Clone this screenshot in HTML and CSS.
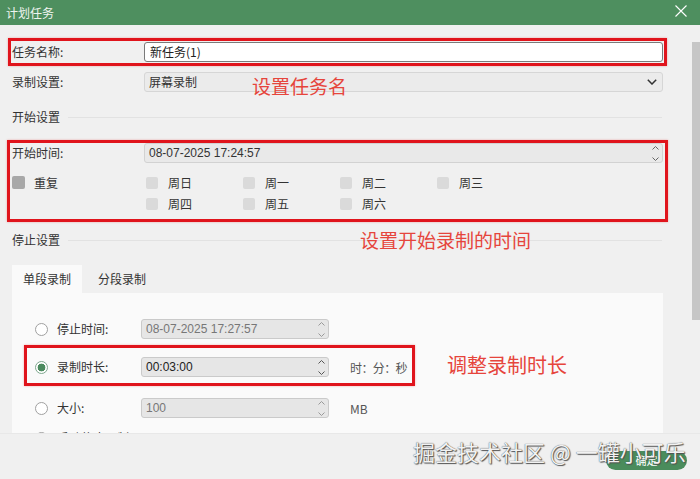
FILE: index.html
```html
<!DOCTYPE html>
<html lang="zh">
<head>
<meta charset="utf-8">
<title>计划任务</title>
<link rel="stylesheet" href="styles.css">
</head>
<body>
<div class="window">
  <div class="titlebar">
    <span class="title">计划任务</span>
    <svg class="close" width="12" height="12" viewBox="0 0 12 12"><path d="M0.5 0.5 L11.5 11.5 M11.5 0.5 L0.5 11.5" stroke="#fff" stroke-width="1.1" fill="none"/></svg>
  </div>
  <div class="body">
    <div class="content">
      <div class="hl hl-name">
        <div class="row">
          <span class="lbl">任务名称:</span>
          <div class="field input">新任务(1)</div>
        </div>
      </div>
      <div class="row row-mode">
        <span class="lbl">录制设置:</span>
        <div class="field select">
          <span>屏幕录制</span>
          <svg class="chev" width="10" height="6" viewBox="0 0 10 6"><path d="M0.8 0.8 L5 5 L9.2 0.8" stroke="#333" stroke-width="1.5" fill="none"/></svg>
        </div>
      </div>
      <div class="section"><span>开始设置</span><span class="rule"></span></div>
      <div class="hl hl-start">
        <div class="row">
          <span class="lbl">开始时间:</span>
          <div class="field spin">
            <span class="num">08-07-2025 17:24:57</span>
            <span class="spinner">
              <svg width="7" height="4" viewBox="0 0 7 4"><path d="M0.5 3.5 L3.5 0.5 L6.5 3.5" stroke="#666" stroke-width="1" fill="none"/></svg>
              <svg width="7" height="4" viewBox="0 0 7 4"><path d="M0.5 0.5 L3.5 3.5 L6.5 0.5" stroke="#666" stroke-width="1" fill="none"/></svg>
            </span>
          </div>
        </div>
        <div class="repeat">
          <div class="repeat-main"><span class="cb cb-dark"></span><span>重复</span></div>
          <div class="days">
            <div class="day"><span class="cb"></span><span>周日</span></div>
            <div class="day"><span class="cb"></span><span>周一</span></div>
            <div class="day"><span class="cb"></span><span>周二</span></div>
            <div class="day"><span class="cb"></span><span>周三</span></div>
            <div class="day"><span class="cb"></span><span>周四</span></div>
            <div class="day"><span class="cb"></span><span>周五</span></div>
            <div class="day"><span class="cb"></span><span>周六</span></div>
          </div>
        </div>
      </div>
      <div class="section section-stop"><span>停止设置</span><span class="rule"></span></div>
      <div class="tabs">
        <div class="tab active">单段录制</div>
        <div class="tab">分段录制</div>
      </div>
      <div class="panel">
        <div class="prow">
          <span class="radio"></span>
          <span class="plbl">停止时间:</span>
          <div class="pfield disabled">
            <span class="num">08-07-2025 17:27:57</span>
            <span class="spinner">
              <svg width="7" height="4" viewBox="0 0 7 4"><path d="M0.5 3.5 L3.5 0.5 L6.5 3.5" stroke="#999" stroke-width="1" fill="none"/></svg>
              <svg width="7" height="4" viewBox="0 0 7 4"><path d="M0.5 0.5 L3.5 3.5 L6.5 0.5" stroke="#999" stroke-width="1" fill="none"/></svg>
            </span>
          </div>
        </div>
        <div class="hl hl-dur">
          <div class="prow prow-in">
            <span class="radio checked"></span>
            <span class="plbl">录制时长:</span>
            <div class="pfield active">
              <span class="num">00:03:00</span>
              <span class="spinner">
                <svg width="7" height="4" viewBox="0 0 7 4"><path d="M0.5 3.5 L3.5 0.5 L6.5 3.5" stroke="#555" stroke-width="1" fill="none"/></svg>
                <svg width="7" height="4" viewBox="0 0 7 4"><path d="M0.5 0.5 L3.5 3.5 L6.5 0.5" stroke="#555" stroke-width="1" fill="none"/></svg>
              </span>
            </div>
            <span class="unit unit-time">时：分：秒</span>
          </div>
        </div>
        <div class="prow prow-size">
          <span class="radio"></span>
          <span class="plbl">大小:</span>
          <div class="pfield disabled">
            <span class="num">100</span>
            <span class="spinner">
              <svg width="7" height="4" viewBox="0 0 7 4"><path d="M0.5 3.5 L3.5 0.5 L6.5 3.5" stroke="#999" stroke-width="1" fill="none"/></svg>
              <svg width="7" height="4" viewBox="0 0 7 4"><path d="M0.5 0.5 L3.5 3.5 L6.5 0.5" stroke="#999" stroke-width="1" fill="none"/></svg>
            </span>
          </div>
          <span class="unit">MB</span>
        </div>
        <div class="prow prow-last">
          <span class="radio"></span>
          <span class="plbl">手动停止录制</span>
        </div>
      </div>
    </div>
    <div class="scrollbar"><div class="thumb"></div></div>
  </div>
  <div class="footer">
    <button class="ok">确定</button>
  </div>
  <div class="note note-name">设置任务名</div>
  <div class="note note-start">设置开始录制的时间</div>
  <div class="note note-dur">调整录制时长</div>
  <div class="watermark">掘金技术社区 @ 一罐小可乐</div>
</div>
</body>
</html>
```
FILE: styles.css
```css
* { box-sizing: border-box; }
html, body { margin: 0; padding: 0; }
body {
  width: 700px;
  height: 479px;
  overflow: hidden;
  background: #f0f0f0;
  font-family: "Noto Sans CJK SC", "Noto Sans", sans-serif;
  font-size: 12px;
  color: #333;
}
.window { position: relative; width: 700px; height: 479px; }

.titlebar {
  height: 25px;
  background: #4e8f5f;
  color: #fff;
  display: flex;
  align-items: center;
  justify-content: space-between;
  padding: 0 13px 0 6px;
}
.title { font-size: 12px; line-height: 24px; color: #eef4ef; }
.close { margin-top: -3px; }

.body { display: flex; height: 408px; overflow: hidden; }
.content { width: 692px; padding-top: 13px; overflow: hidden; }
.scrollbar { width: 8px; padding-top: 17px; }
.thumb { height: 278px; background: #c6c6c6; }

.hl {
  border: 3px solid #e0141c;
  box-shadow: 0 0 2px rgba(230, 30, 30, 0.35);
}
.hl-name { margin-left: 8px; width: 659px; padding: 1px; }
.row { display: flex; align-items: center; height: 20px; }
.lbl { width: 132px; line-height: 20px; }
.field {
  width: 519px;
  height: 20px;
  border-radius: 3px;
  display: flex;
  align-items: center;
  justify-content: space-between;
  padding-left: 5px;
  line-height: 18px;
}
.input { background: #fff; border: 1px solid #7a7a7a; color: #222; }
.select { background: #ebebeb; border: 1px solid #d6d6d6; padding-right: 5px; padding-left: 4px; }
.chev { display: block; }
.spin { background: #e9e9e9; border: 1px solid #d2d2d2; padding-left: 4px; padding-right: 3px; }
.num { font-family: "Liberation Sans", "Noto Sans CJK SC", sans-serif; font-size: 12px; }
.spinner { display: flex; flex-direction: column; justify-content: space-between; height: 15px; }
.spinner svg { display: block; }

.row-mode { margin-top: 6px; padding-left: 12px; }

.section {
  margin-top: 15px;
  height: 20px;
  padding-left: 12px;
  padding-right: 30px;
  display: flex;
  align-items: center;
  line-height: 20px;
}
.rule { flex: 1; height: 1px; background: #e2e2e2; margin-left: 8px; }

.hl-start { margin-top: 13px; margin-left: 7px; width: 661px; padding: 0 2px 5px 2px; }
.repeat { display: flex; margin-top: 9px; }
.repeat-main { width: 134px; height: 21px; display: flex; align-items: center; gap: 9px; }
.days { display: grid; grid-template-columns: repeat(4, 97px); grid-auto-rows: 21px; }
.day { display: flex; align-items: center; gap: 10px; }
.cb { width: 12px; height: 12px; border-radius: 2px; background: #dadada; }
.cb-dark { width: 13px; height: 13px; background: #a8a8a8; }

.section-stop { margin-top: 8px; }

.tabs { margin-top: 15px; margin-left: 12px; height: 28px; display: flex; }
.tab { line-height: 28px; padding-left: 16px; color: #333; }
.tab.active { width: 70px; padding: 0; text-align: center; background: #fafafa; }

.panel {
  margin-left: 12px;
  width: 651px;
  height: 160px;
  background: #fafafa;
  padding-top: 26px;
}
.prow { display: flex; align-items: center; height: 20px; padding-left: 23px; }
.prow-in { padding-left: 0; }
.radio {
  width: 13px;
  height: 13px;
  border-radius: 50%;
  border: 1px solid #a0a0a0;
  background: #fff;
  flex: none;
}
.radio.checked {
  border: 1.5px solid #7fa88e;
  background: radial-gradient(circle, #4b8a5e 0 3.6px, #fff 4.2px);
}
.plbl { margin-left: 9px; width: 84px; line-height: 20px; white-space: nowrap; }
.pfield {
  width: 188px;
  height: 20px;
  border-radius: 3px;
  background: #e6e6e6;
  border: 1px solid #cacaca;
  display: flex;
  align-items: center;
  justify-content: space-between;
  padding-left: 4px;
  padding-right: 3px;
}
.pfield.disabled { color: #777; }
.pfield.active { color: #222; }
.unit { margin-left: 21px; color: #555; }
.unit-time { letter-spacing: -0.6px; }
.hl-dur { margin-top: 6px; margin-left: 12px; width: 391px; padding: 9px 0 6px 8px; }
.prow-size { margin-top: 12px; }
.prow-last { margin-top: 10px; }

.footer { height: 46px; display: flex; justify-content: flex-end; align-items: flex-start; padding: 17px 13px 0 0; border-top: 1px solid #e8e8e8; }
.ok {
  width: 81px;
  height: 19px;
  border: none;
  border-radius: 10px;
  background: #4a8c5c;
  color: #fff;
  font-family: "Noto Sans CJK SC", sans-serif;
  font-size: 11px;
  line-height: 19px;
  padding: 0;
}

.note {
  position: absolute;
  color: #e6453c;
  font-size: 19px;
  line-height: 20px;
  white-space: nowrap;
}
.note-name { left: 252px; top: 76px; }
.note-start { left: 360px; top: 230px; }
.note-dur { left: 447px; top: 355px; font-size: 20px; }

.watermark {
  position: absolute;
  left: 413px;
  top: 439px;
  font-size: 22px;
  line-height: 24px;
  color: #f2f2f2;
  white-space: nowrap;
  text-shadow: 0 0 1px #333, 1px 1px 1px #555;
}
```
